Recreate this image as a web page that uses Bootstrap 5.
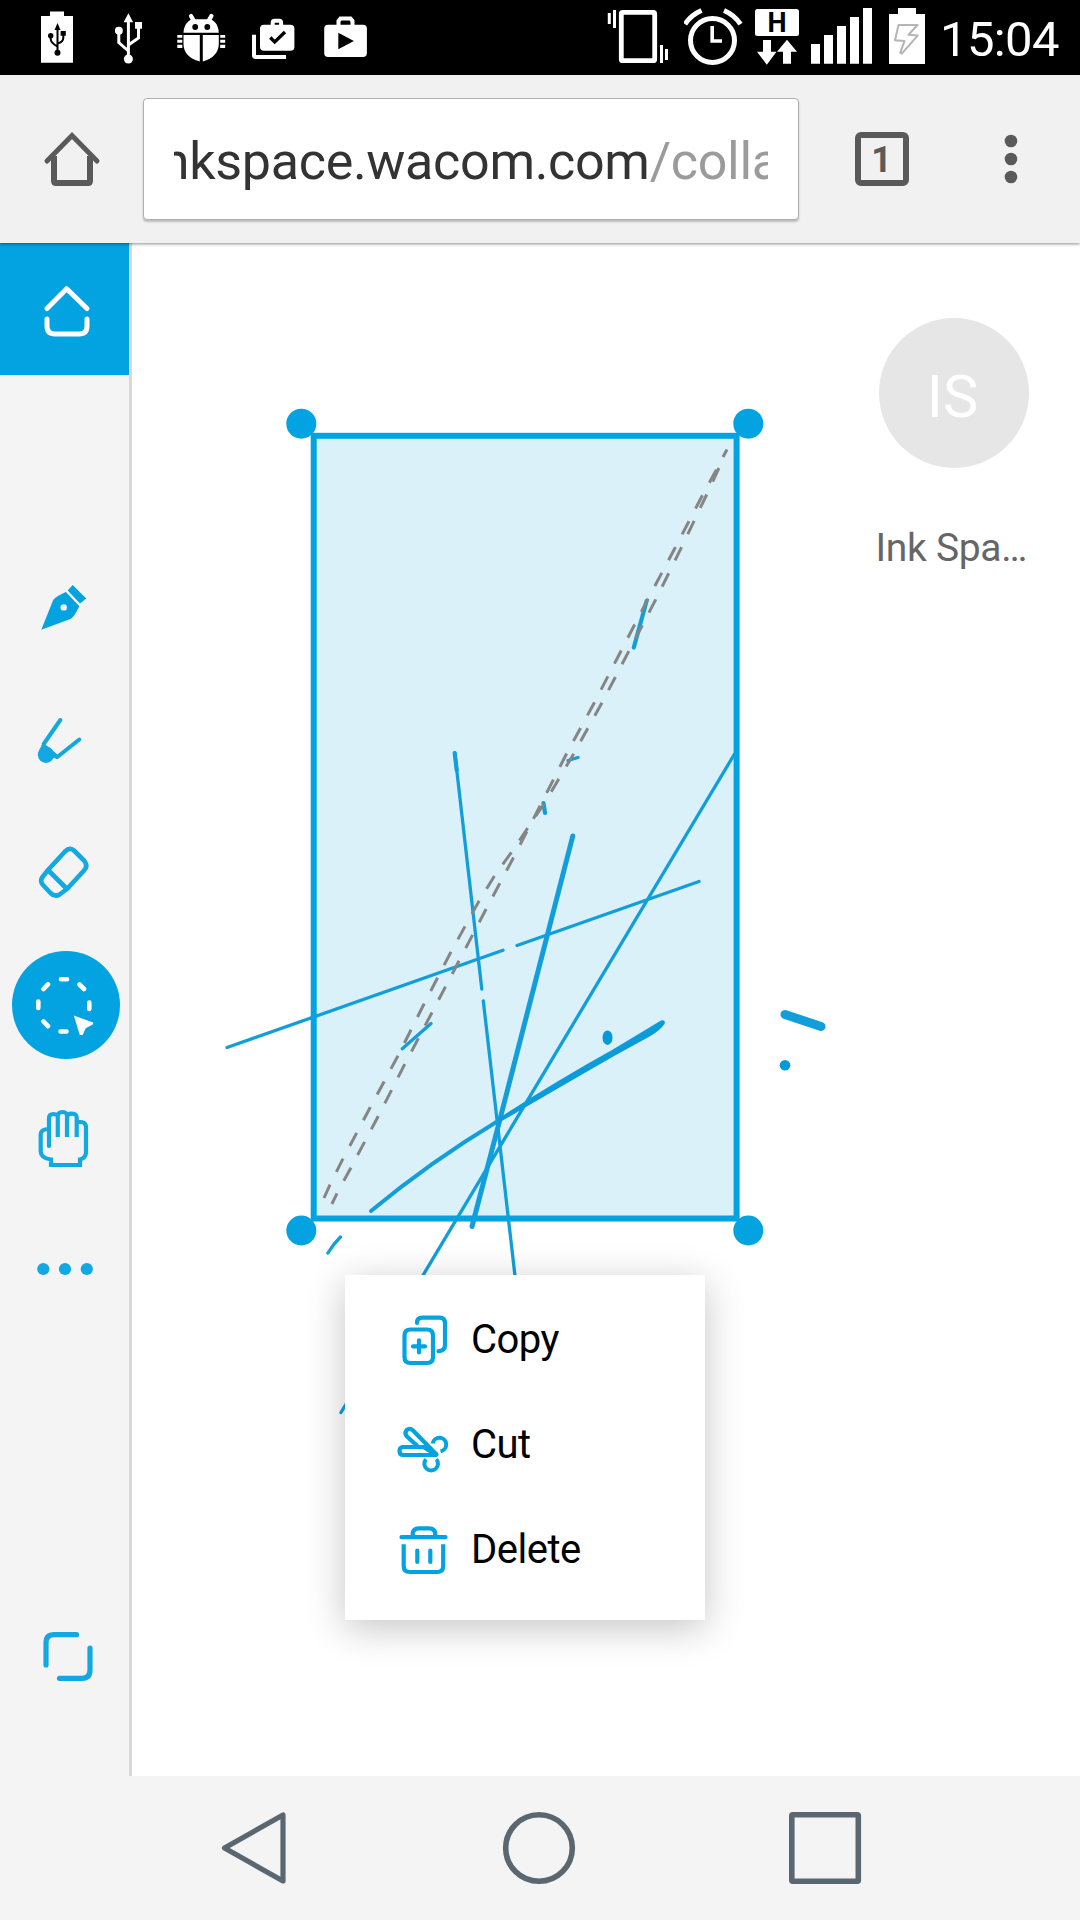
<!DOCTYPE html>
<html lang="en">
<head>
<meta charset="utf-8">
<meta name="viewport" content="width=device-width, initial-scale=1">
<title>Ink Space</title>
<link href="https://cdn.jsdelivr.net/npm/bootstrap@5.3.0/dist/css/bootstrap.min.css" rel="stylesheet">
<style>
  :root { --ink: #02a3e0; }
  body { font-family: Roboto, "Liberation Sans", sans-serif; width: 1080px; height: 1920px; overflow: hidden; background: #fff; }
  svg { display: block; flex: none; }
  .status-bar { height: 75px; background: #000; padding-left: 41px; padding-right: 21px; }
  .status-bar svg { height: 75px; fill: #fff; }
  .clock { font-size: 49px; line-height: 75px; color: #fff; padding-top: 3px; letter-spacing: -.6px; }
  .browser-bar { height: 168px; background: #f1f1f1; padding-top: 23px; box-shadow: 0 1px 3px rgba(0,0,0,.45); z-index: 2; }
  .browser-bar > svg { height: 121px; }
  .address { width: 656px; height: 122px; background: #fff; border: 1px solid #b0b0b0; border-radius: 4px; box-shadow: 0 2px 2px rgba(0,0,0,.22); padding: 0 30px; }
  .address-clip { width: 594px; font-size: 52px; line-height: 119px; color: #333; padding-top: 3px; }
  .address-clip span { display: block; margin-left: -25.5px; letter-spacing: -.3px; }
  .address-clip em { font-style: normal; color: #9b9b9b; }
  .tool-rail { width: 132px; background: #f4f4f4; border-right: 3px solid #d8d8d8; padding-bottom: 54px; }
  .tool { width: 129px; height: 132px; padding: 0; border: 0; background: none; }
  .tool svg { width: 129px; height: 132px; }
  .tool-home { background: var(--ink); margin-bottom: 167px; }
  .ln { fill: none; stroke-linecap: round; stroke-linejoin: round; }
  .sheet { inset: 0; width: 948px; height: 1533px; }
  .profile { width: 150px; margin: 75px 51px 0 auto; }
  .avatar { width: 150px; height: 150px; background: #e6e6e6; color: #fff; font-size: 59.5px; padding: 10px 3px 0 0; }
  .profile-name { font-size: 39px; line-height: 46px; color: #666; margin: 57px -4px 0 -3.5px; letter-spacing: -.3px; }
  .ctx-menu { left: 213px; top: 1032px; width: 360px; height: 345px; background: #fff; padding-top: 11px; box-shadow: 0 8px 36px rgba(0,0,0,.23); }
  .ctx-menu button { height: 105px; padding: 0 0 0 50px; border: 0; background: none; font-size: 40px; letter-spacing: -.5px; color: #000; gap: 20px; }
  .ctx-menu button span { padding-top: 2px; }
  .ctx-menu svg { width: 56px; height: 105px; }
  .sys-nav { height: 144px; background: #f4f4f4; padding-left: 218px; gap: 213px; }
</style>
</head>
<body class="d-flex flex-column">

<header class="status-bar d-flex align-items-center justify-content-between flex-shrink-0">
  <div class="d-flex">
    <svg width="74" viewBox="41 0 74 75"><path d="M41 16h9v-4.5h14V16h9v46.7H41z"/>
      <g fill="#000"><path d="M57.5 23l3 7h-6z"/><circle cx="57.5" cy="52.7" r="3"/><circle cx="50.7" cy="35.8" r="2.7"/><path d="M60.6 31h5.2v4.8h-5.2z"/></g>
      <path d="M57.5 28v23M50.7 36v3q0 4 6.8 7.500M63.300 35v3q0 4-5.800 5.500" fill="none" stroke="#000" stroke-width="2"/></svg>
    <svg width="62" viewBox="115 0 62 75"><path d="M128.400 13.200l4.800 9h-9.600zM135 22h7v6.800h-7z"/><circle cx="128.400" cy="59" r="4.500"/><circle cx="118.800" cy="30.700" r="4"/>
      <path d="M128.400 20v38M118.800 31v11.500l9.600 8.500M138.500 28v10l-10.100 7" fill="none" stroke="#fff" stroke-width="3"/></svg>
    <svg width="75" viewBox="177 0 75 75"><path d="M183.500 32.700C184 24 189 19.300 194 19.300h14.500c5 0 10 4.700 10.300 13.400zM183.500 35h16.300v26.500C189 59 183.500 52 183.500 44zM218.800 35h-16v26.500C213 59 218.800 52 218.800 44z"/>
      <path d="M191 16l3.500 6M211.400 16l-3.500 6" stroke="#fff" stroke-width="4.300" stroke-linecap="round"/><circle cx="195.200" cy="27" r="2.900" fill="#000"/><circle cx="207.300" cy="27" r="2.900" fill="#000"/>
      <path d="M177.300 35h5v2.700h-5zM177.300 39.700h5v3h-5zM177.300 44.700h5V48h-5zM220.200 35h5v2.700h-5zM220.200 39.700h5v3h-5zM220.200 44.700h5V48h-5z"/></svg>
    <svg width="72" viewBox="252 0 72 75"><rect x="260" y="24.700" width="34.400" height="26" rx="4"/><path d="M254 34.700v20.500q0 1.800 1.800 1.800H286M272.700 25.500v-3q0-1.800 1.800-1.800h4.800q1.800 0 1.800 1.800v3" fill="none" stroke="#fff" stroke-width="4"/><path d="M270.300 37.500l4.400 4.500 10.300-10" fill="none" stroke="#000" stroke-width="3.300"/></svg>
    <svg width="44" viewBox="323.500 0 44 75"><rect x="323.700" y="24.700" width="42.700" height="32.300" rx="4"/><path d="M338 25.500v-4.500l2-2.500h10l2 2.500v4.500" fill="none" stroke="#fff" stroke-width="4"/><path d="M337.800 32.700l15.600 8.300-15.600 8.300z" fill="#000"/></svg>
  </div>
  <div class="d-flex">
    <svg width="77" viewBox="607 0 77 75"><rect x="621.300" y="13.300" width="33.400" height="48.400" rx="1.500" fill="none" stroke="#fff" stroke-width="4.800"/><path d="M607.800 14h3v11h-3zM613 11h3v18h-3zM660 46h3v18h-3zM665 50h3v11h-3z"/></svg>
    <svg width="70" viewBox="684 0 70 75"><g fill="none" stroke="#fff"><circle cx="712.500" cy="41.500" r="22" stroke-width="5"/><path d="M685 25.200Q691 16 701.500 11.500M740.500 25.200Q734.500 16 724 11.500" stroke-width="5"/><path d="M712.200 27v15H722" stroke-width="3.600"/></g></svg>
    <svg width="56" viewBox="754 0 56 75"><rect x="755" y="10" width="44" height="27" rx="2.500"/><text x="777" y="33.300" text-anchor="middle" font-family="Roboto" font-weight="700" font-size="27" fill="#000">H</text><path d="M763 41h8v11.700h5.500l-9.700 13-9.800-13h6zM787 40.700l10 12h-6v12h-8v-12h-6z"/></svg>
    <svg width="78" viewBox="810 0 78 75"><path d="M811 45h9v19.700h-9zM824 36h9v28.700h-9zM837 27h9v37.700h-9zM850 18h9v46.700h-9zM863 9h9v55.700h-9z"/></svg>
    <svg width="52" viewBox="888 0 52 75"><path d="M889 15h9V9h18v6h9v50h-36z"/><path d="M898.500 26H917.500l-9 9.800 9.300.6-16 18.300-1.500-1 4.200-11.800-9.500-.6z" fill="none" stroke="#b5b5b5" stroke-width="2" stroke-linejoin="round"/></svg>
    <span class="clock">15:04</span>
  </div>
</header>

<div class="browser-bar d-flex flex-shrink-0 position-relative">
  <svg width="143" viewBox="0 98 143 121"><path class="ln" style="stroke-linejoin:miter" d="M47 161l25-25.500L97 161" stroke="#5a5a5a" stroke-width="5"/><path d="M54 156v25q0 2 2 2h32q2 0 2-2v-25" fill="none" stroke="#5a5a5a" stroke-width="6"/></svg>
  <div class="address"><div class="address-clip overflow-hidden text-nowrap"><span>inkspace.wacom.com<em>/colla</em></span></div></div>
  <svg width="281" viewBox="799 98 281 121"><rect x="858" y="135" width="48" height="48" rx="3" fill="none" stroke="#5a5a5a" stroke-width="6"/><text x="881.500" y="172" text-anchor="middle" font-family="Roboto" font-weight="700" font-size="36" fill="#5a5a5a">1</text><g fill="#5a5a5a"><circle cx="1011" cy="141" r="6.300"/><circle cx="1011" cy="159" r="6.300"/><circle cx="1011" cy="177" r="6.300"/></g></svg>
</div>

<div class="d-flex flex-grow-1">
  <nav class="tool-rail d-flex flex-column flex-shrink-0">
    <button class="tool tool-home" aria-label="Home"><svg viewBox="0 243 129 132"><path class="ln" stroke="#fff" stroke-width="5" d="M47 308.500l19.700-19.800L87 308.500M47 319v7q0 8 8 8h24q8 0 8-8v-7"/></svg></button>
    <button class="tool" aria-label="Pen"><svg viewBox="0 542 129 132" fill="#02a3e0"><path d="M72.700 585l13.500 13.600-6.200 5-12.300-13zM41.300 629.800l12-30q3-3.500 12.600-7.800L79.300 606.200l-3.300 6.300q-2 4-5 6.200z"/><circle cx="63.700" cy="607.400" r="3.200" fill="#f4f4f4"/></svg></button>
    <button class="tool" aria-label="Marker"><svg viewBox="0 674 129 132" fill="#12a8e2"><path class="ln" stroke="#12a8e2" stroke-width="4" d="M60.300 720L43.700 744M79.300 739.500L57.300 757"/><path d="M43 742.500l15 12.500-2 3.500-4-1-5 4-8-11z"/><circle cx="46" cy="754.800" r="8.200"/></svg></button>
    <button class="tool" aria-label="Eraser"><svg viewBox="0 806 129 132"><path class="ln" stroke="#12a8e2" stroke-width="4.600" d="M48 870L65 851.500q5-5 9.500-.5l9.500 9.500q4.500 5 0 10L67 889zM48 870l-5.500 7q-3 4 .5 8l7.500 8q4.500 4.500 9 1.500l7.500-5.500"/></svg></button>
    <button class="tool" aria-label="Select"><svg viewBox="0 938 129 132"><circle cx="66" cy="1005" r="54" fill="#02a3e0"/><path class="ln" stroke="#fff" stroke-width="4.600" d="M61 979.300h6M60.500 1031.500h6M38.300 1001.500v6.500M89.300 1002.500v6.500M43.500 989l4.500-4.700M79.500 984.500l4.500 4.500M43.500 1021.500l4.500 4.700"/><path fill="#fff" d="M73.800 1015.500l19.300 7v1.800l-7.400 4-3 6.700h-2.900z"/></svg></button>
    <button class="tool" aria-label="Pan"><svg viewBox="0 1070 129 132"><path class="ln" stroke="#12a8e2" stroke-width="4.200" style="stroke-linejoin:miter" d="M49 1146v-28q0-4 4.500-4t4.300 4v19v-20.500q0-4.500 4.700-4.500t4.500 4.500V1137v-19.500q0-3.800 5-3.800t4.700 4.200v19V1122h4q5 0 5.300 5v25q0 6-6 7.500v5.500H51v-5.500q-10-1-10.300-8V1134q.3-4.500 7.300-5"/></svg></button>
    <button class="tool" aria-label="More"><svg viewBox="0 1202 129 132" fill="#12a8e2"><circle cx="43.300" cy="1269" r="6.100"/><circle cx="65" cy="1269" r="6.100"/><circle cx="86.800" cy="1269" r="6.100"/></svg></button>
    <button class="tool mt-auto" aria-label="Expand"><svg viewBox="0 1590 129 132"><path class="ln" stroke="#12a8e2" stroke-width="5.200" d="M46 1665v-22q0-8.300 8-8.300h22.500M90 1648v22q0 8.300-8 8.300H59.500"/></svg></button>
  </nav>

  <main class="flex-grow-1 position-relative">
    <svg class="sheet position-absolute" viewBox="132 243 948 1533">
      <rect x="314" y="436" width="422.500" height="782.500" fill="#dbf1fa"/>
      <g class="ln" stroke="#129edb">
        <path stroke-width="3.300" d="M454.800 753L481.800 989M483.300 1001L515 1276M734.500 754L341 1412.500M227 1047.500L503 950.300M517 945.500L699 881.500M340.400 1237q-7 7-12.500 16M402.300 1048.700L431 1023.500M578 757.500l-10 3"/>
        <path stroke-width="4.200" d="M646.600 601L633.800 647.500M543.500 803l1.500 10M454.700 753l2 17"/>
        <path stroke-width="5" d="M572.800 836L499 1123L472 1226.500"/>
        <path stroke-width="4" d="M371 1211Q430 1162 498.800 1120.500"/>
        <path stroke-width="9" d="M785 1014.500l36 12"/>
      </g>
      <path fill="#0b9bda" d="M497.800 1118.800Q556 1081 612 1050L661 1020.500q5-1 3.500 3.500-4 6-14 12Q636 1044 615 1055.500 560 1087 499.800 1122.300z"/>
      <ellipse cx="607.500" cy="1037.700" rx="5" ry="7.300" fill="#0599da"/><circle cx="785" cy="1065.300" r="5.300" fill="#0599da"/>
      <g fill="none" stroke="#858585" stroke-width="3">
        <path d="M727 449.500l-4 7.500M330 1184.700l-6 13.300M337 1193.300L331.900 1204"/>
        <path pathLength="56" stroke-dasharray="1.020 .980" d="M718.900 468L706.800 494.300 681.800 546.700 656 599 628.900 651 602 702.700 573.600 754 543.900 804 511.400 852.300 494.400 876 479 901 450.900 952 424 1004 398 1055.700 370.300 1107.300 343 1158.700 330 1184.700"/>
        <path pathLength="56" stroke-dasharray="1.020 .980" d="M716.400 469.700L702.100 496 675.400 547.300 647.900 599 621 651 594.300 702.700 566.400 754 540 806 513.400 857.700 486 909.300 458.800 961.300 431.900 1012.700 404.700 1064.300 378.200 1116.300 350.900 1167.700 337 1193.300"/>
      </g>
      <rect x="313.700" y="435.800" width="422.900" height="782.700" fill="none" stroke="#02a3e0" stroke-width="6"/>
      <g fill="#02a3e0"><circle cx="301.300" cy="423.700" r="15"/><circle cx="748.300" cy="423.700" r="15"/><circle cx="301.300" cy="1230.500" r="15"/><circle cx="748.300" cy="1230.500" r="15"/></g>
    </svg>

    <div class="profile position-relative">
      <div class="avatar rounded-circle d-flex align-items-center justify-content-center">IS</div>
      <div class="profile-name text-nowrap">Ink Spa…</div>
    </div>

    <div class="ctx-menu position-absolute d-flex flex-column">
      <button class="d-flex align-items-center"><svg viewBox="395 1286 56 105"><path class="ln" stroke="#02a3e0" stroke-width="4.200" d="M410.500 1329.500h16.500q6 0 6 6v21.500q0 6-6 6h-16.500q-6 0-6-6v-21.500q0-6 6-6zM417 1323q0-5.300 5.500-5.300h17q5.500 0 5.500 5.500v22q0 5.500-6.500 5.900M419 1340.300v12.200M413 1346.400h12"/></svg><span>Copy</span></button>
      <button class="d-flex align-items-center"><svg viewBox="395 1391 56 105"><path class="ln" stroke="#02a3e0" stroke-width="4.200" d="M436.500 1454.500L413 1430.500q-3-3-6.300-.5-2.500 3 0 6.200l11.800 10.800H402.500q-3 .5-3 4t3 4H436zM418.500 1447h5l12 7.500"/><path fill="none" stroke="#02a3e0" stroke-width="4" d="M432.700 1443.500a6.800 6.800 0 1 1 7.800 7.800M426 1459.300a6.800 6.800 0 1 0 10.300 0"/></svg><span>Cut</span></button>
      <button class="d-flex align-items-center"><svg viewBox="395 1496 56 105"><path class="ln" stroke="#02a3e0" stroke-width="4.200" d="M401.500 1537.200h44M412.700 1536v-2q.3-5.700 6-5.700h10.500q5.700 0 6 5.700v2M417.300 1550.500v11.500M430.300 1550.500v11.500"/><path fill="none" stroke="#02a3e0" stroke-width="4.200" d="M403.700 1544.300v21.700q0 6 6 6h27.500q6 0 6-6v-21.700"/></svg><span>Delete</span></button>
    </div>
  </main>
</div>

<footer class="sys-nav d-flex align-items-center flex-shrink-0">
  <svg width="71" height="80" viewBox="218 1808 71 80"><path d="M283 1815v66L224.500 1848z" fill="none" stroke="#5b6770" stroke-width="5.200" stroke-linejoin="round"/></svg>
  <svg width="74" height="80" viewBox="502 1808 74 80"><circle cx="539" cy="1848" r="33.300" fill="none" stroke="#5b6770" stroke-width="5.600"/></svg>
  <svg width="76" height="80" viewBox="789 1808 76 80"><rect x="791.800" y="1814.800" width="66.500" height="66.400" rx="1" fill="none" stroke="#5b6770" stroke-width="5.600"/></svg>
</footer>

<script src="https://cdn.jsdelivr.net/npm/bootstrap@5.3.0/dist/js/bootstrap.bundle.min.js"></script>
</body>
</html>
